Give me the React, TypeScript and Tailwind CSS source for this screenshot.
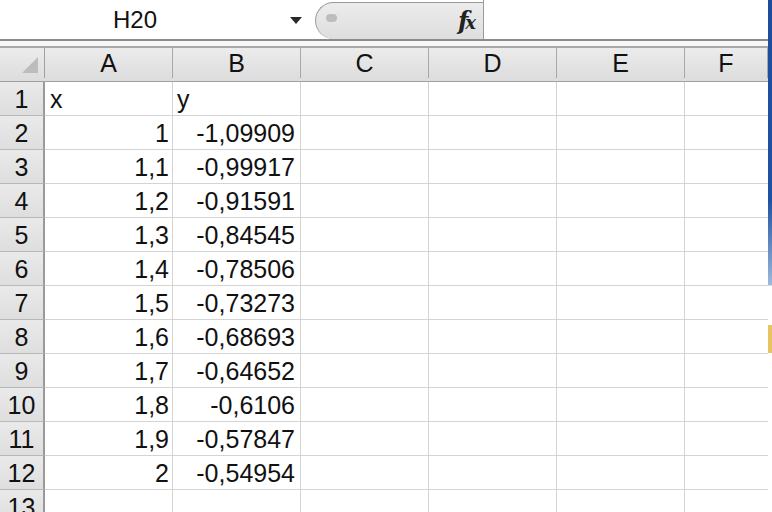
import React from "react";

const cols = ["A", "B", "C", "D", "E", "F"];

const rows: Array<[string, string]> = [
  ["x", "y"],
  ["1", "-1,09909"],
  ["1,1", "-0,99917"],
  ["1,2", "-0,91591"],
  ["1,3", "-0,84545"],
  ["1,4", "-0,78506"],
  ["1,5", "-0,73273"],
  ["1,6", "-0,68693"],
  ["1,7", "-0,64652"],
  ["1,8", "-0,6106"],
  ["1,9", "-0,57847"],
  ["2", "-0,54954"],
  ["", ""],
];

const grid = "grid grid-cols-[45px_128px_128px_128px_128px_128px_83px]";

export default function App() {
  return (
    <div className="flex h-[512px] w-[772px] overflow-hidden bg-white font-['Liberation_Sans',Arial,sans-serif] text-[25px] text-[#111]">
      <div className="flex w-[768px] shrink-0 flex-col">
        {/* formula bar */}
        <div className="flex h-[41px] shrink-0 items-stretch border-b-2 border-[#8c8c8c] bg-white">
          <div className="flex w-[315px] items-center">
            <span className="ml-[113px] text-[24px] leading-none">H20</span>
            <svg className="ml-[133px] mt-[2px]" width="12" height="8" viewBox="0 0 12 8">
              <path d="M0 0 L12 0 L6 7 Z" fill="#2a2a2a" />
            </svg>
          </div>
          <div className="relative mt-[2px] flex w-[168px] items-center justify-end rounded-l-[20px] border border-r-0 border-b-0 border-[#9a9a9a] bg-gradient-to-b from-[#ececec] to-[#dedede] pr-[10px]">
            <span className="absolute left-[10px] top-[11px] h-[8px] w-[11px] rounded-full bg-[#bdbdbd]" />
            <span className="font-['DejaVu_Serif',serif] text-[24px] font-bold italic leading-none tracking-[-3px] text-[#222]">
              f<span className="text-[18px]">x</span>
            </span>
          </div>
          <div className="flex-1 border-l border-[#9a9a9a] bg-white" />
        </div>
        <div className="h-[5px] shrink-0 bg-[#f7f7f7]" />

        {/* column header */}
        <div className={`${grid} h-[36px] shrink-0 border-t-2 border-b border-t-[#a8a8a8] border-b-[#a0a0a0] bg-gradient-to-b from-[#ececec] to-[#dcdcdc]`}>
          <div className="relative border-r border-[#a0a0a0]">
            <svg className="absolute bottom-[5px] right-[6px]" width="16" height="16" viewBox="0 0 16 16">
              <path d="M16 0 L16 16 L0 16 Z" fill="#bcbcbc" />
            </svg>
          </div>
          {cols.map((c) => (
            <div key={c} className="flex items-center justify-center border-r border-[#a8a8a8] pt-[1px] leading-none">
              {c}
            </div>
          ))}
          <div />
        </div>

        {/* rows */}
        {rows.map(([a, b], i) => (
          <div key={i} className={`${grid} h-[34px] shrink-0`}>
            <div className="flex items-center justify-center border-r-2 border-b border-r-[#9a9a9a] border-b-[#b8b8b8] bg-gradient-to-b from-[#eaeaea] to-[#dedede] pt-[2px] leading-none">
              {i + 1}
            </div>
            <div className={`flex items-center border-r border-b border-[#d4d4d4] pt-[2px] leading-none ${i === 0 ? "justify-start pl-[5px]" : "justify-end pr-[3px]"}`}>
              {a}
            </div>
            <div className={`flex items-center border-r border-b border-[#d4d4d4] pt-[2px] leading-none ${i === 0 ? "justify-start pl-[4px]" : "justify-end pr-[5px]"}`}>
              {b}
            </div>
            <div className="border-r border-b border-[#d4d4d4]" />
            <div className="border-r border-b border-[#d4d4d4]" />
            <div className="border-r border-b border-[#d4d4d4]" />
            <div className="border-b border-[#d4d4d4]" />
          </div>
        ))}
      </div>

      {/* window edge */}
      <div className="h-[512px] w-[4px] shrink-0 bg-[linear-gradient(to_bottom,#1d4c9c_0px,#1f51a3_200px,#9db9dc_285px,#ffffff_286px,#ffffff_325px,#e8c460_325px,#e8c460_353px,#ffffff_353px,#ffffff_512px)]" />
    </div>
  );
}
